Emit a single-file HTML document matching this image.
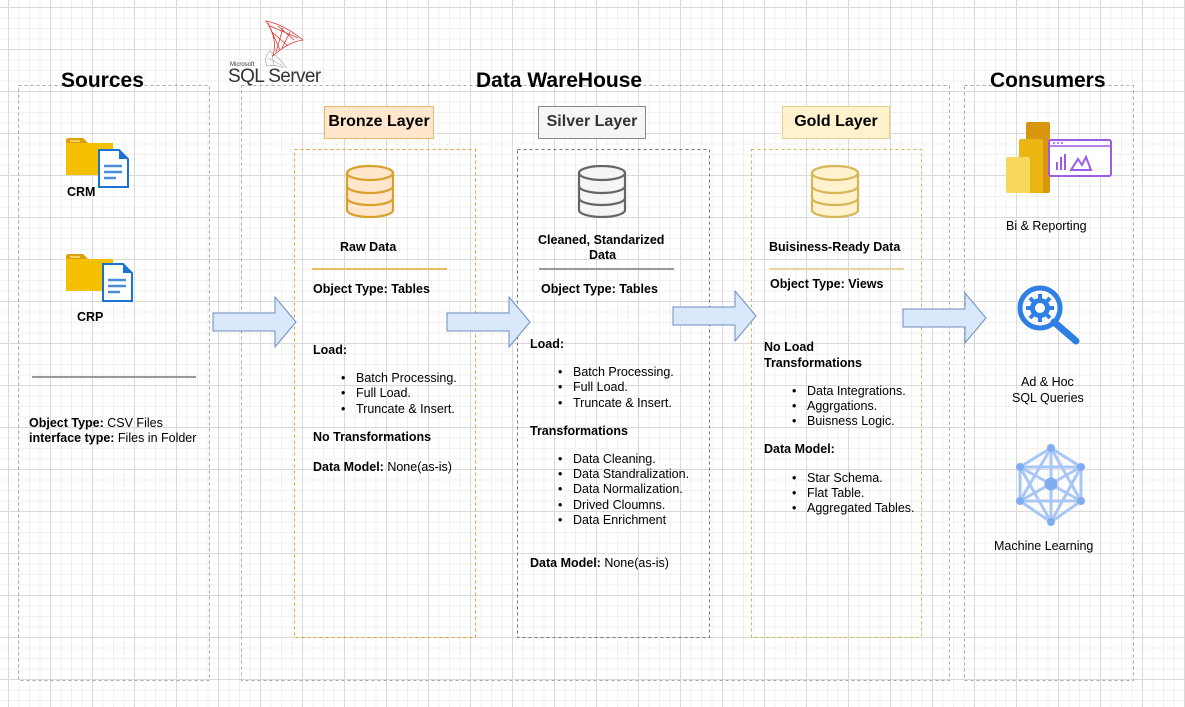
<!DOCTYPE html>
<html><head><meta charset="utf-8">
<style>
*{margin:0;padding:0;box-sizing:border-box}
body{width:1185px;height:707px;overflow:hidden;position:relative;background:#fff;
background-image:
linear-gradient(to right,#dadada 1px,transparent 1px),
linear-gradient(to bottom,#dadada 1px,transparent 1px),
linear-gradient(to right,#f0f0f0 1px,transparent 1px),
linear-gradient(to bottom,#f0f0f0 1px,transparent 1px);
background-size:42px 42px,42px 42px,10.5px 10.5px,10.5px 10.5px;
background-position:8px 7px,8px 7px,8px 7px,8px 7px;
font-family:"Liberation Sans",Arial,sans-serif;color:#000}
.a{position:absolute}
.t{position:absolute;font-size:12.5px;line-height:15px;white-space:nowrap}
.b{font-weight:bold}
.h{position:absolute;font-size:21px;font-weight:bold;white-space:nowrap}
.lbl{position:absolute;font-size:16px;font-weight:bold;text-align:center;line-height:30px;border:1.5px solid}
.li::before{content:"•";position:absolute;left:-15px}
</style></head><body>

<svg class="a" style="left:0;top:0" width="1185" height="707">
<g fill="none" stroke-dasharray="3 3">
<rect x="18.5" y="85.5" width="191" height="595" stroke="#aaa"/>
<rect x="241.5" y="85.5" width="708" height="595" stroke="#aaa"/>
<rect x="964.5" y="85.5" width="169" height="595" stroke="#aaa"/>
<rect x="294.5" y="149.5" width="181" height="488" stroke="#e0a030"/>
<rect x="517.5" y="149.5" width="192" height="488" stroke="#777"/>
<rect x="751.5" y="149.5" width="170" height="488" stroke="#d6b656"/>
</g>
</svg>

<div class="h" style="left:61px;top:69px">Sources</div>
<div class="h" style="left:476px;top:69px">Data WareHouse</div>
<div class="h" style="left:990px;top:69px">Consumers</div>

<!-- SQL server logo -->
<svg class="a" style="left:258px;top:18px" width="50" height="50" viewBox="0 0 50 50">
<g fill="none" stroke="#d33" stroke-width="0.8">
<path d="M8 3 Q25 6 45 22 Q30 24 15 38 Q20 20 8 3Z"/>
<path d="M12 8 L40 20 M14 14 L30 28 M10 5 L22 32 M25 10 L18 34 M32 14 L24 30 M20 8 L36 22"/>
</g>
<g fill="none" stroke="#aaa" stroke-width="0.7">
<path d="M12 33 Q5 40 9 48 Q20 46 30 52 Q22 40 12 33Z"/>
<path d="M10 40 L25 48 M14 36 L16 48"/>
</g>
</svg>
<div class="a" style="left:230px;top:62px;font-size:6px;color:#333">Microsoft</div>
<div class="a" style="left:228px;top:66px;font-size:19px;color:#333;letter-spacing:-0.6px">SQL Server</div>

<!-- Sources content -->
<svg class="a" style="left:66px;top:138px" width="64" height="50" viewBox="0 0 64 50">
<path d="M0 3 Q0 0 3 0 L17 0 L22 5 L47 5 L47 37 L0 37Z" fill="#f5c000"/>
<path d="M0 3 Q0 0 3 0 L17 0 L22 5 L0 5Z" fill="#d9a200"/>
<rect x="4" y="2" width="10" height="2" fill="#f8d25a"/>
<path d="M33 12 L53 12 L62 21 L62 49 L33 49Z" fill="#fff" stroke="#1a73d0" stroke-width="2"/>
<path d="M53 12 L53 21 L62 21Z" fill="#1a73d0"/>
<path d="M38 28 H56 M38 34 H56 M38 40 H50" stroke="#4a8fdb" stroke-width="2.5"/>
</svg>
<div class="t b" style="left:67px;top:185px">CRM</div>
<svg class="a" style="left:66px;top:254px" width="68" height="50" viewBox="0 0 68 50">
<path d="M0 3 Q0 0 3 0 L17 0 L22 5 L47 5 L47 37 L0 37Z" fill="#f5c000"/>
<path d="M0 3 Q0 0 3 0 L17 0 L22 5 L0 5Z" fill="#d9a200"/>
<rect x="4" y="2" width="10" height="2" fill="#f8d25a"/>
<path d="M37 10 L57 10 L66 19 L66 47 L37 47Z" fill="#fff" stroke="#1a73d0" stroke-width="2"/>
<path d="M57 10 L57 19 L66 19Z" fill="#1a73d0"/>
<path d="M42 26 H60 M42 32 H60 M42 38 H54" stroke="#4a8fdb" stroke-width="2.5"/>
</svg>
<div class="t b" style="left:77px;top:310px">CRP</div>
<div class="a" style="left:32px;top:376px;width:164px;height:2px;background:#999"></div>
<div class="t" style="left:29px;top:416px"><b>Object Type:</b> CSV Files</div>
<div class="t" style="left:29px;top:431px"><b>interface type:</b> Files in Folder</div>

<!-- arrows -->
<svg class="a" style="left:212px;top:296px" width="86" height="54"><path d="M1 17 H63 V1 L84 26 L63 51 V35 H1Z" fill="#dae8fc" stroke="#6c8ebf"/></svg>
<svg class="a" style="left:446px;top:296px" width="86" height="54"><path d="M1 17 H63 V1 L84 26 L63 51 V35 H1Z" fill="#dae8fc" stroke="#6c8ebf"/></svg>
<svg class="a" style="left:672px;top:290px" width="86" height="54"><path d="M1 17 H63 V1 L84 26 L63 51 V35 H1Z" fill="#dae8fc" stroke="#6c8ebf"/></svg>
<svg class="a" style="left:902px;top:292px" width="86" height="54"><path d="M1 17 H63 V1 L84 26 L63 51 V35 H1Z" fill="#dae8fc" stroke="#6c8ebf"/></svg>

<!-- Bronze -->
<div class="lbl" style="left:324px;top:106px;width:110px;height:33px;background:#ffe6cc;border-color:#e8b96a">Bronze Layer</div>
<svg class="a" style="left:345px;top:165px" width="50" height="54" viewBox="0 0 50 54"><g fill="#ffe6cc" stroke="#d9a02a" stroke-width="2.2"><path d="M2 8 V45 A23 7 0 0 0 48 45 V8"/><ellipse cx="25" cy="8" rx="23" ry="7"/><path d="M2 21 A23 7 0 0 0 48 21 M2 33 A23 7 0 0 0 48 33" fill="none"/></g></svg>
<div class="t b" style="left:340px;top:240px">Raw Data</div>
<div class="a" style="left:312px;top:268px;width:135px;height:2px;background:#e8c060"></div>
<div class="t b" style="left:313px;top:282px">Object Type: Tables</div>
<div class="t b" style="left:313px;top:343px">Load:</div>
<div class="t li" style="left:356px;top:371px">Batch Processing.</div>
<div class="t li" style="left:356px;top:386px">Full Load.</div>
<div class="t li" style="left:356px;top:402px">Truncate &amp; Insert.</div>
<div class="t b" style="left:313px;top:430px">No Transformations</div>
<div class="t" style="left:313px;top:460px"><b>Data Model:</b> None(as-is)</div>

<!-- Silver -->
<div class="lbl" style="left:538px;top:106px;width:108px;height:33px;background:#f5f5f5;border-color:#888;color:#333">Silver Layer</div>
<svg class="a" style="left:577px;top:165px" width="50" height="54" viewBox="0 0 50 54"><g fill="#f5f5f5" stroke="#666" stroke-width="2.2"><path d="M2 8 V45 A23 7 0 0 0 48 45 V8"/><ellipse cx="25" cy="8" rx="23" ry="7"/><path d="M2 21 A23 7 0 0 0 48 21 M2 33 A23 7 0 0 0 48 33" fill="none"/></g></svg>
<div class="t b" style="left:538px;top:233px">Cleaned, Standarized</div>
<div class="t b" style="left:589px;top:248px">Data</div>
<div class="a" style="left:539px;top:268px;width:135px;height:2px;background:#999"></div>
<div class="t b" style="left:541px;top:282px">Object Type: Tables</div>
<div class="t b" style="left:530px;top:337px">Load:</div>
<div class="t li" style="left:573px;top:365px">Batch Processing.</div>
<div class="t li" style="left:573px;top:380px">Full Load.</div>
<div class="t li" style="left:573px;top:396px">Truncate &amp; Insert.</div>
<div class="t b" style="left:530px;top:424px">Transformations</div>
<div class="t li" style="left:573px;top:452px">Data Cleaning.</div>
<div class="t li" style="left:573px;top:467px">Data Standralization.</div>
<div class="t li" style="left:573px;top:482px">Data Normalization.</div>
<div class="t li" style="left:573px;top:498px">Drived Cloumns.</div>
<div class="t li" style="left:573px;top:513px">Data Enrichment</div>
<div class="t" style="left:530px;top:556px"><b>Data Model:</b> None(as-is)</div>

<!-- Gold -->
<div class="lbl" style="left:782px;top:106px;width:108px;height:33px;background:#fff2cc;border-color:#e8d08a">Gold Layer</div>
<svg class="a" style="left:810px;top:165px" width="50" height="54" viewBox="0 0 50 54"><g fill="#fff2cc" stroke="#d6b656" stroke-width="2.2"><path d="M2 8 V45 A23 7 0 0 0 48 45 V8"/><ellipse cx="25" cy="8" rx="23" ry="7"/><path d="M2 21 A23 7 0 0 0 48 21 M2 33 A23 7 0 0 0 48 33" fill="none"/></g></svg>
<div class="t b" style="left:769px;top:240px">Buisiness-Ready Data</div>
<div class="a" style="left:769px;top:268px;width:135px;height:2px;background:#e8d6a0"></div>
<div class="t b" style="left:770px;top:277px">Object Type: Views</div>
<div class="t b" style="left:764px;top:340px">No Load</div>
<div class="t b" style="left:764px;top:356px">Transformations</div>
<div class="t li" style="left:807px;top:384px">Data Integrations.</div>
<div class="t li" style="left:807px;top:399px">Aggrgations.</div>
<div class="t li" style="left:807px;top:414px">Buisness Logic.</div>
<div class="t b" style="left:764px;top:442px">Data Model:</div>
<div class="t li" style="left:807px;top:471px">Star Schema.</div>
<div class="t li" style="left:807px;top:486px">Flat Table.</div>
<div class="t li" style="left:807px;top:501px">Aggregated Tables.</div>

<!-- Consumers -->
<svg class="a" style="left:1005px;top:120px" width="110" height="75" viewBox="0 0 110 75">
<rect x="21" y="2" width="24" height="71" rx="2" fill="#d8960c"/>
<rect x="14" y="19" width="24" height="54" rx="2" fill="#ebb512"/>
<rect x="1" y="37" width="24" height="36" rx="2" fill="#f7d85a"/>
<rect x="44" y="20" width="62" height="36" rx="2" fill="#fff" stroke="#9b5de5" stroke-width="2"/>
<path d="M44 26 H106" stroke="#9b5de5" stroke-width="1.5"/>
<path d="M48 23 h2 M52 23 h2 M56 23 h2" stroke="#9b5de5" stroke-width="1.5"/>
<path d="M52 50 V42 M56 50 V37 M60 50 V34 M66 50 L73 39 L77 45 L81 37 L86 50 Z" fill="none" stroke="#9b5de5" stroke-width="2"/>
</svg>
<div class="t" style="left:1006px;top:219px">Bi &amp; Reporting</div>

<svg class="a" style="left:1016px;top:284px" width="68" height="68" viewBox="0 0 68 68">
<circle cx="24" cy="24" r="20" fill="none" stroke="#2f80e4" stroke-width="5"/>
<path d="M38 38 L60 57" stroke="#2f80e4" stroke-width="7" stroke-linecap="round"/>
<circle cx="24" cy="24" r="10" fill="#2f80e4"/>
<g stroke="#2f80e4" stroke-width="4"><path d="M24 10 V38 M10 24 H38 M14 14 L34 34 M34 14 L14 34"/></g>
<circle cx="24" cy="24" r="5" fill="#fff"/>
</svg>
<div class="t" style="left:1021px;top:375px">Ad &amp; Hoc</div>
<div class="t" style="left:1012px;top:391px">SQL Queries</div>

<svg class="a" style="left:1014px;top:444px" width="76" height="84" viewBox="0 0 76 84">
<g stroke="#a8c7f5" stroke-width="3" fill="none">
<path d="M37 4 L6 23 L6 57 L37 78 L67 57 L67 23 Z"/>
<path d="M37 4 L37 78 M6 23 L67 57 M67 23 L6 57 M37 4 L6 57 M37 4 L67 57 M37 78 L6 23 M37 78 L67 23 M6 23 L67 23 M6 57 L67 57"/>
</g>
<g fill="#7fadf0"><circle cx="37" cy="4" r="4"/><circle cx="6" cy="23" r="4"/><circle cx="67" cy="23" r="4"/><circle cx="6" cy="57" r="4"/><circle cx="67" cy="57" r="4"/><circle cx="37" cy="78" r="4"/><circle cx="37" cy="40" r="6.5"/></g>
</svg>
<div class="t" style="left:994px;top:539px">Machine Learning</div>

</body></html>
